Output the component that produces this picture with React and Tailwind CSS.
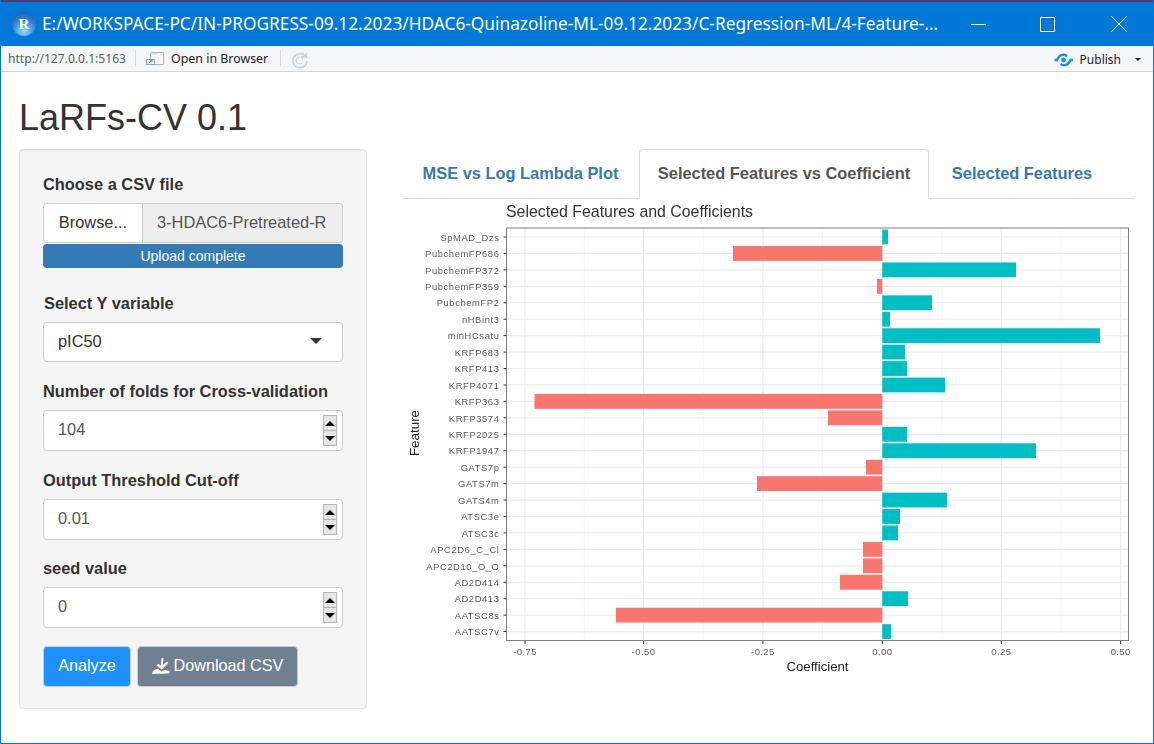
import React from 'react';

const features = [
  ['SpMAD_Dzs', 888], ['PubchemFP686', 733], ['PubchemFP372', 1016], ['PubchemFP359', 877], ['PubchemFP2', 932],
  ['nHBint3', 890], ['minHCsatu', 1100], ['KRFP683', 905], ['KRFP413', 907], ['KRFP4071', 945],
  ['KRFP363', 534.5], ['KRFP3574', 828], ['KRFP2025', 907], ['KRFP1947', 1036], ['GATS7p', 866],
  ['GATS7m', 757], ['GATS4m', 947], ['ATSC3e', 900], ['ATSC3c', 898], ['APC2D6_C_Cl', 863],
  ['APC2D10_O_O', 863], ['AD2D414', 840], ['AD2D413', 908], ['AATSC8s', 616], ['AATSC7v', 891],
];

const ticks = [[525, '-0.75'], [643.6, '-0.50'], [762.9, '-0.25'], [882.3, '0.00'], [1001.3, '0.25'], [1120.7, '0.50']];

// svg coordinates are page coordinates minus the chart origin
const OX = 403;
const OY = 199;
const ZERO = 882.3;

const FeatureChart = () => (
  <svg width="732" height="490" viewBox={`${OX} ${OY} 732 490`} className="block blur-[0.4px]" fontFamily="'Liberation Sans', sans-serif">
    <text x="506" y="216.5" fontSize="15.9" fill="#333">Selected Features and Coefficients</text>
    <rect x="506.5" y="228" width="622" height="412.5" fill="#fff" />
    {ticks.map(([x]) => <line key={x} x1={x} x2={x} y1="228" y2="640" stroke="#ebebeb" strokeWidth="1.2" />)}
    {ticks.slice(0, 5).map(([x], i) => {
      const mid = x + (ticks[i + 1][0] - x) / 2;
      return <line key={mid} x1={mid} x2={mid} y1="228" y2="640" stroke="#f2f2f2" strokeWidth="0.8" />;
    })}
    {features.map(([name], i) => {
      const y = 237 + i * 16.44;
      return <line key={name} x1="506.5" x2="1128.5" y1={y} y2={y} stroke="#ebebeb" strokeWidth="1.2" />;
    })}
    {features.map(([name, end], i) => {
      const y = 237 + i * 16.44;
      const pos = end > ZERO;
      return (
        <rect
          key={name}
          x={pos ? ZERO : end}
          y={y - 7.4}
          width={Math.abs(end - ZERO)}
          height="14.8"
          fill={pos ? '#00bfc4' : '#f8766d'}
        />
      );
    })}
    <rect x="506.5" y="228" width="622" height="412.5" fill="none" stroke="#7f7f7f" strokeWidth="1" />
    {features.map(([name], i) => {
      const y = 237 + i * 16.44;
      return (
        <g key={name}>
          <line x1="503.5" x2="506.5" y1={y} y2={y} stroke="#333" strokeWidth="1" />
          <text x="499.5" y={y + 3.7} textAnchor="end" fontSize="9.4" letterSpacing="0.6" fill="#5a5a5a">{name}</text>
        </g>
      );
    })}
    {ticks.map(([x, label]) => (
      <g key={label}>
        <line x1={x} x2={x} y1="641" y2="644" stroke="#333" strokeWidth="1" />
        <text x={x} y="655" textAnchor="middle" fontSize="9.5" letterSpacing="0.4" fill="#5a5a5a">{label}</text>
      </g>
    ))}
    <text x="817.5" y="670.5" textAnchor="middle" fontSize="13.2" fill="#222">Coefficient</text>
    <text transform="translate(418.5 433) rotate(-90)" textAnchor="middle" fontSize="13.4" fill="#222">Feature</text>
  </svg>
);

const Spinner = () => (
  <div className="flex flex-col w-[14px] h-[31px]">
    <div className="h-[16px] bg-[#e6e6e6] border border-[#b5b5b5] flex items-center justify-center">
      <div className="w-0 h-0 border-x-[5px] border-x-transparent border-b-[5px] border-b-black" />
    </div>
    <div className="h-[15px] bg-[#e6e6e6] border border-t-0 border-[#b5b5b5] flex items-center justify-center">
      <div className="w-0 h-0 border-x-[5px] border-x-transparent border-t-[5px] border-t-black" />
    </div>
  </div>
);

const NumberField = ({ label, value, className }) => (
  <div className={className}>
    <div className="text-[16.4px] font-bold text-[#333] leading-[20px] mb-[9px]">{label}</div>
    <div className="h-[41px] bg-white border border-[#ccc] rounded-[4px] flex items-center justify-between pl-[14px] pr-[5px] text-[16.4px] text-[#555]">
      <span className="pb-[2px]">{value}</span>
      <Spinner />
    </div>
  </div>
);

const Sidebar = () => (
  <div className="w-[348px] h-[560px] bg-[#f5f5f5] border border-[#e3e3e3] rounded-[4px] px-[23px] pt-[24px] shadow-[inset_0_1px_1px_rgba(0,0,0,0.05)]">
    <div className="text-[16.4px] font-bold text-[#333] leading-[20px] mb-[9px]">Choose a CSV file</div>
    <div className="flex h-[40px] text-[16.4px]">
      <div className="w-[100px] pb-[2px] bg-white border border-[#ccc] rounded-l-[4px] flex items-center justify-center text-[#333]">Browse...</div>
      <div className="flex-1 pb-[2px] bg-[#eee] border border-l-0 border-[#ccc] rounded-r-[4px] flex items-center pl-[14px] text-[#555] overflow-hidden whitespace-nowrap">3-HDAC6-Pretreated-R</div>
    </div>
    <div className="mt-px h-[24px] bg-[#337ab7] rounded-[4px] text-white text-[14px] flex items-center justify-center">Upload complete</div>

    <div className="mt-[25px] ml-px text-[16.4px] font-bold text-[#333] leading-[20px] mb-[9px]">Select Y variable</div>
    <div className="h-[40px] pb-[2px] bg-white border border-[#ccc] rounded-[4px] flex items-center justify-between pl-[14px] pr-[20px] text-[16.4px] text-[#333]">
      <span>pIC50</span>
      <div className="w-0 h-0 border-x-[6px] border-x-transparent border-t-[6px] border-t-[#333]" />
    </div>

    <NumberField className="mt-[19px]" label="Number of folds for Cross-validation" value="104" />
    <NumberField className="mt-[19px]" label="Output Threshold Cut-off" value="0.01" />
    <NumberField className="mt-[18px]" label="seed value" value="0" />

    <div className="mt-[18px] flex gap-[6px] text-[16.2px] text-white">
      <div className="w-[88px] h-[41px] pb-[2px] bg-[#1e90ff] border border-[#ccc] rounded-[4px] flex items-center justify-center">Analyze</div>
      <div className="w-[161px] h-[41px] pb-[2px] bg-[#708090] border border-[#ccc] rounded-[4px] flex items-center justify-center gap-[4px]">
        <svg width="18" height="16" viewBox="0 0 18 16" fill="#fff">
          <path d="M9.5 0 L11.5 0.3 L10.8 7.2 L15 3.6 L16.3 5 L9.8 11.6 L4.6 7.4 L5.8 5.8 L8.9 7.6 Z" />
          <path d="M0 16 Q0.6 12 3.6 11.4 L5.8 10.8 L9.6 13.6 L12.6 11.8 L14.6 12.6 L17.4 12.8 Q18 15 17 15.6 Q16 15 15 15.6 Z" />
        </svg>
        <span>Download CSV</span>
      </div>
    </div>
  </div>
);

const Tabs = () => (
  <div className="flex h-[50px] border-b border-[#ddd] text-[16.4px] font-bold text-[#337ab7] pl-0">
    <div className="ml-px w-[233px] flex items-center justify-center">MSE vs Log Lambda Plot</div>
    <div className="ml-[2px] w-[290px] h-[50px] pb-[2px] bg-white border border-[#ddd] border-b-white rounded-t-[4px] text-[#555] flex items-center justify-center">Selected Features vs Coefficient</div>
    <div className="ml-px w-[184px] flex items-center justify-center">Selected Features</div>
  </div>
);

const App = () => (
  <div className="w-[1154px] h-[744px] overflow-hidden bg-white font-['Liberation_Sans',sans-serif] flex flex-col border-x border-b border-[#0078d7]">
    <div className="h-[2px] -mx-px bg-[#4b3a75] shrink-0" />
    <div className="h-[44px] -mx-px bg-[#0078d7] flex items-center text-white shrink-0">
      <div className="ml-[12px] w-[24px] h-[24px] rounded-full bg-[radial-gradient(circle_at_50%_80%,#8fdcf8,#2c7fd4_55%,#1a4fa8)] flex items-center justify-center text-[15px] font-bold font-['Liberation_Serif',serif]">R</div>
      <div className="ml-[6px] w-[912px] whitespace-nowrap overflow-hidden text-[17.3px] font-['Noto_Sans',sans-serif] text-white">E:/WORKSPACE-PC/IN-PROGRESS-09.12.2023/HDAC6-Quinazoline-ML-09.12.2023/C-Regression-ML/4-Feature-...</div>
      <div className="ml-[17px] w-[15px] h-px bg-white" />
      <div className="ml-[54px] w-[15px] h-[15px] border border-white" />
      <svg className="ml-[56px]" width="16" height="16" viewBox="0 0 16 16" stroke="#fff" strokeWidth="1"><path d="M0.5 0.5 L15.5 15.5 M15.5 0.5 L0.5 15.5" /></svg>
    </div>
    <div className="h-[26px] bg-[#f4f6f7] border-b border-[#d4d7da] flex items-center shrink-0 font-['Noto_Sans',sans-serif]">
      <span className="ml-[7px] pt-[2px] text-[12.1px] text-[#5a5f63]">http://127.0.0.1:5163</span>
      <div className="ml-[9px] -mt-[2px] w-px h-[16px] bg-[#d5d8da]" />
      <svg className="ml-[10px]" width="18" height="13" viewBox="0 0 18 13">
        <path d="M4.5 1.5 Q4.5 0.5 5.5 0.5 H17.5 V12.5 H4.5 Z" fill="#f8fafb" stroke="#a9b4bc" />
        <path d="M5 1 h6 l1 2 h-7 z" fill="#dde3e8" />
        <rect x="0.5" y="7.5" width="8" height="5" fill="#e8ecef" stroke="#9aa5ad" />
        <path d="M3 11 L6 8 M4 8 h2 v2" stroke="#7b868e" fill="none" />
      </svg>
      <span className="ml-[7px] pt-[2px] text-[12.4px] text-[#1c2226]">Open in Browser</span>
      <div className="ml-[12px] -mt-[2px] w-px h-[16px] bg-[#d5d8da]" />
      <svg className="ml-[10px] mt-[2px]" width="18" height="18" viewBox="0 0 18 18" fill="none" stroke="#c9d0d6" strokeWidth="1.6">
        <path d="M15 6 A7 7 0 1 0 16 10" />
        <path d="M10 6 h5.5 v-4" />
        <path d="M12 9 A3.5 3.5 0 1 0 11 12" strokeWidth="1" />
      </svg>
      <div className="ml-auto mt-[2px] flex items-center">
        <svg width="20" height="14" viewBox="0 0 20 14" fill="none" stroke="#1a94e0" strokeWidth="2.4">
          <circle cx="9.5" cy="7" r="2.4" fill="#1a94e0" stroke="none" />
          <path d="M0.5 7 H3 C5 2 9 0.5 13 3" />
          <path d="M19 7 H16.5 C14.5 12 10 13.5 6.5 11" />
        </svg>
        <span className="ml-[6px] pt-px text-[12px] text-[#1c2226]">Publish</span>
        <div className="ml-[14px] mr-[12px] w-0 h-0 border-x-[3px] border-x-transparent border-t-[3px] border-t-[#222]" />
      </div>
    </div>
    <div className="flex-1 pl-[18px] pt-[26px]">
      <h1 className="text-[36px] leading-[40px] text-[#333] font-normal">LaRFs-CV 0.1</h1>
      <div className="mt-[11px] flex items-start">
        <Sidebar />
        <div className="ml-[36px] w-[732px]">
          <Tabs />
          <FeatureChart />
        </div>
      </div>
    </div>
  </div>
);

export default App;
